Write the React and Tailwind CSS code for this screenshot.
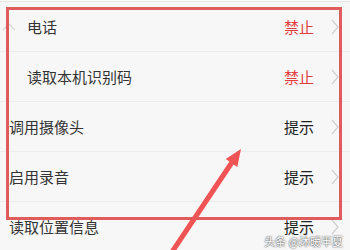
import React from 'react';

const rows = [
  { label: '电话', value: '禁止', indent: true, red: true },
  { label: '读取本机识别码', value: '禁止', indent: true, red: true },
  { label: '调用摄像头', value: '提示' },
  { label: '启用录音', value: '提示' },
  { label: '读取位置信息', value: '提示' },
];

const Chevron = () => (
  <svg width="8" height="16" viewBox="0 0 8 16" className="shrink-0">
    <path d="M1 1 L7 8 L1 15" fill="none" stroke="#cfcfcf" strokeWidth="1.2" />
  </svg>
);

export default function App() {
  return (
    <div
      className="relative w-[350px] h-[250px] overflow-hidden bg-[#f7f7f7]"
      style={{ fontFamily: '"Noto Sans CJK SC", "Noto Sans", sans-serif' }}
    >
      {/* top strip */}
      <div className="h-[2px] bg-[#fafafa] border-b border-[#e6e6e6]" />

      {/* list */}
      <div className="flex flex-col">
        {rows.map((row, i) => (
          <div
            key={i}
            className="h-[50px] flex items-center border-b border-[#ececec]"
          >
            <span
              className={`flex-1 text-[15px] leading-none text-[#333] ${
                row.indent ? 'pl-[27px]' : 'pl-[9px]'
              }`}
            >
              {row.label}
            </span>
            <span
              className={`text-[15px] leading-none ${
                row.red ? 'text-[#e23d3d]' : 'text-[#222]'
              }`}
            >
              {row.value}
            </span>
            <div className="w-[17px]" />
            <Chevron />
            <div className="w-[11px]" />
          </div>
        ))}
      </div>

      {/* collapse caret on the left */}
      <svg
        className="absolute left-[2px] top-[22px]"
        width="14"
        height="10"
        viewBox="0 0 14 10"
      >
        <path d="M1 8 L7 2 L13 8" fill="none" stroke="#d4d4d4" strokeWidth="1.2" />
      </svg>

      {/* red highlight box */}
      <div className="absolute left-[6px] top-[7px] w-[336px] h-[213px] border-[3px] border-[#e05b5b]" />

      {/* arrow */}
      <svg className="absolute inset-0" width="350" height="250" viewBox="0 0 350 250">
        <polygon
          points="241,149 237.3,166.9 233.6,164.4 174.1,253.4 169.9,250.6 229.4,161.6 225.7,159.1"
          fill="#f05454"
        />
      </svg>

      {/* watermark */}
      <div
        className="absolute right-[7px] bottom-[3px] text-[11px] leading-none text-white"
        style={{ textShadow: '0 0 2px #555, 0 0 1px #555' }}
      >
        头条 @沐暖半夏
      </div>
    </div>
  );
}
